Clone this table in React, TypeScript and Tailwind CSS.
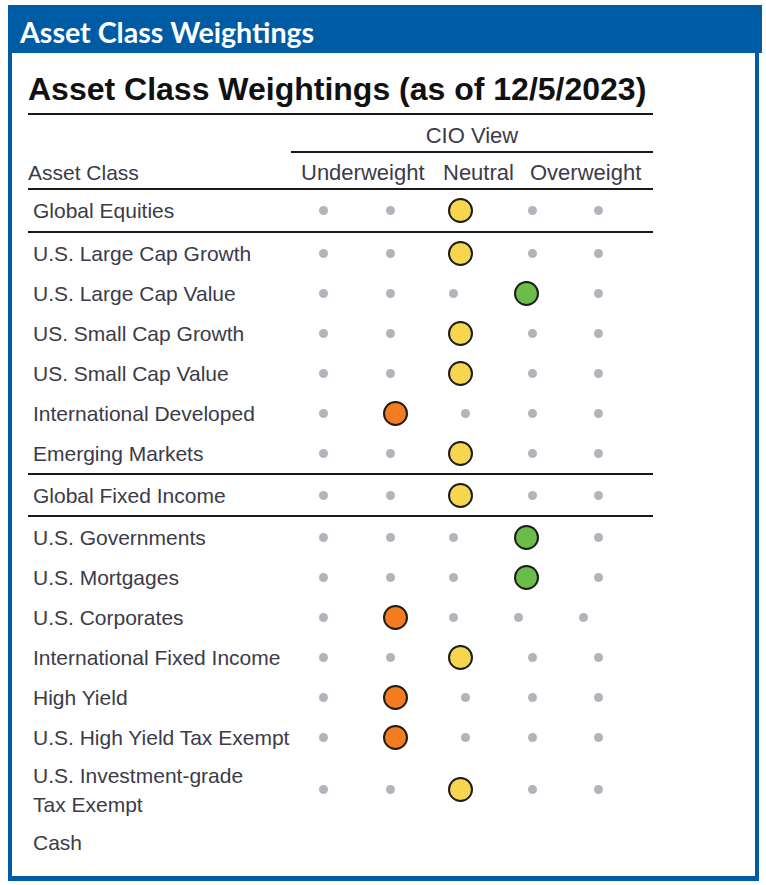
import React from "react";

type Row = {
  label: string[];
  pick: number | null;
  shift?: number[];
  h: number;
  line?: boolean;
};

const COLORS: Record<number, string> = {
  1: "bg-[#f27c1f]",
  2: "bg-[#f6d64f]",
  3: "bg-[#6bbd4a]",
};
const PICK_SHIFT: Record<number, string> = {
  1: "translate-x-[5px]",
  2: "translate-x-[7px]",
  3: "-translate-x-[6px]",
};

const rows: Row[] = [
  { label: ["Global Equities"], pick: 2, h: 41, line: true },
  { label: ["U.S. Large Cap Growth"], pick: 2, h: 40 },
  { label: ["U.S. Large Cap Value"], pick: 3, h: 40 },
  { label: ["US. Small Cap Growth"], pick: 2, h: 40 },
  { label: ["US. Small Cap Value"], pick: 2, h: 40 },
  { label: ["International Developed"], pick: 1, h: 40, shift: [0, 0, 12, 0, 0] },
  { label: ["Emerging Markets"], pick: 2, h: 40, line: true },
  { label: ["Global Fixed Income"], pick: 2, h: 40, line: true },
  { label: ["U.S. Governments"], pick: 3, h: 40 },
  { label: ["U.S. Mortgages"], pick: 3, h: 40 },
  { label: ["U.S. Corporates"], pick: 1, h: 40, shift: [0, 0, 0, -14, -15] },
  { label: ["International Fixed Income"], pick: 2, h: 40 },
  { label: ["High Yield"], pick: 1, h: 40, shift: [0, 0, 12, 0, 0] },
  { label: ["U.S. High Yield Tax Exempt"], pick: 1, h: 40, shift: [0, 0, 12, 0, 0] },
  { label: ["U.S. Investment-grade", "Tax Exempt"], pick: 2, h: 65 },
  { label: ["Cash"], pick: null, h: 40 },
];

const COLW = ["w-[66px]", "w-[68px]", "w-[58px]", "w-[100px]", "w-[32px]"];

function Dots({ row }: { row: Row }) {
  if (row.pick === null) return <div className="flex" />;
  return (
    <div className="flex">
      {COLW.map((w, i) => {
        const s = row.shift ? row.shift[i] : 0;
        return (
          <div key={i} className={`${w} flex justify-center items-center`}>
            {row.pick === i ? (
              <div
                className={`w-[25px] h-[25px] rounded-full border-2 border-[#1c1c1c] ${COLORS[i]} ${PICK_SHIFT[i]}`}
              />
            ) : (
              <div
                className="w-[9px] h-[9px] rounded-full bg-[#b3b3bb]"
                style={s ? { transform: `translateX(${s}px)` } : undefined}
              />
            )}
          </div>
        );
      })}
    </div>
  );
}

export default function App() {
  return (
    <div className="w-[766px] h-[885px] bg-white pt-[5px] pl-[8px]">
      <div className="w-[754px]">
        <div
          className="h-[48px] bg-[#005ba5] pl-[12px] pt-[12px] text-white font-bold text-[28.6px] leading-[30px]"
          style={{ fontFamily: "Lato, 'Open Sans', sans-serif" }}
        >
          Asset Class Weightings
        </div>
        <div className="w-[751px] border-l-4 border-r-4 border-b-[5px] border-[#005ba5] pb-[14px]">
          <div
            className="ml-[16px] w-[625px] text-[#3b3b4a]"
            style={{ fontFamily: "'Liberation Sans', Arial, sans-serif" }}
          >
            <div className="pt-[20px] text-[32px] leading-[32px] font-bold text-[#111]">
              Asset Class Weightings (as of 12/5/2023)
            </div>
            <div className="mt-[8px] border-t-2 border-[#1a1a1a]" />
            <div className="h-[36px] flex items-center pl-[263px]">
              <div className="w-[362px] text-center text-[22px] leading-[22px] pt-[6px]">CIO View</div>
            </div>
            <div className="ml-[263px] border-t-2 border-[#1a1a1a]" />
            <div className="h-[35px] flex items-end pb-[4px] text-[22px] leading-[22px]">
              <div className="w-[273px] text-[21px]">Asset Class</div>
              <div className="w-[127px]">Underweight</div>
              <div className="w-[15px]" />
              <div className="w-[71px]">Neutral</div>
              <div className="w-[16px]" />
              <div>Overweight</div>
            </div>
            <div className="border-t-2 border-[#1a1a1a]" />
            {rows.map((r, idx) => (
              <React.Fragment key={idx}>
                <div className="flex items-center text-[21px] leading-[29px]" style={{ height: r.h }}>
                  <div className="w-[262px] pl-[5px]">
                    {r.label.map((l, j) => (
                      <div key={j}>{l}</div>
                    ))}
                  </div>
                  <Dots row={r} />
                </div>
                {r.line && <div className="border-t-2 border-[#1a1a1a]" />}
              </React.Fragment>
            ))}
          </div>
        </div>
      </div>
    </div>
  );
}
